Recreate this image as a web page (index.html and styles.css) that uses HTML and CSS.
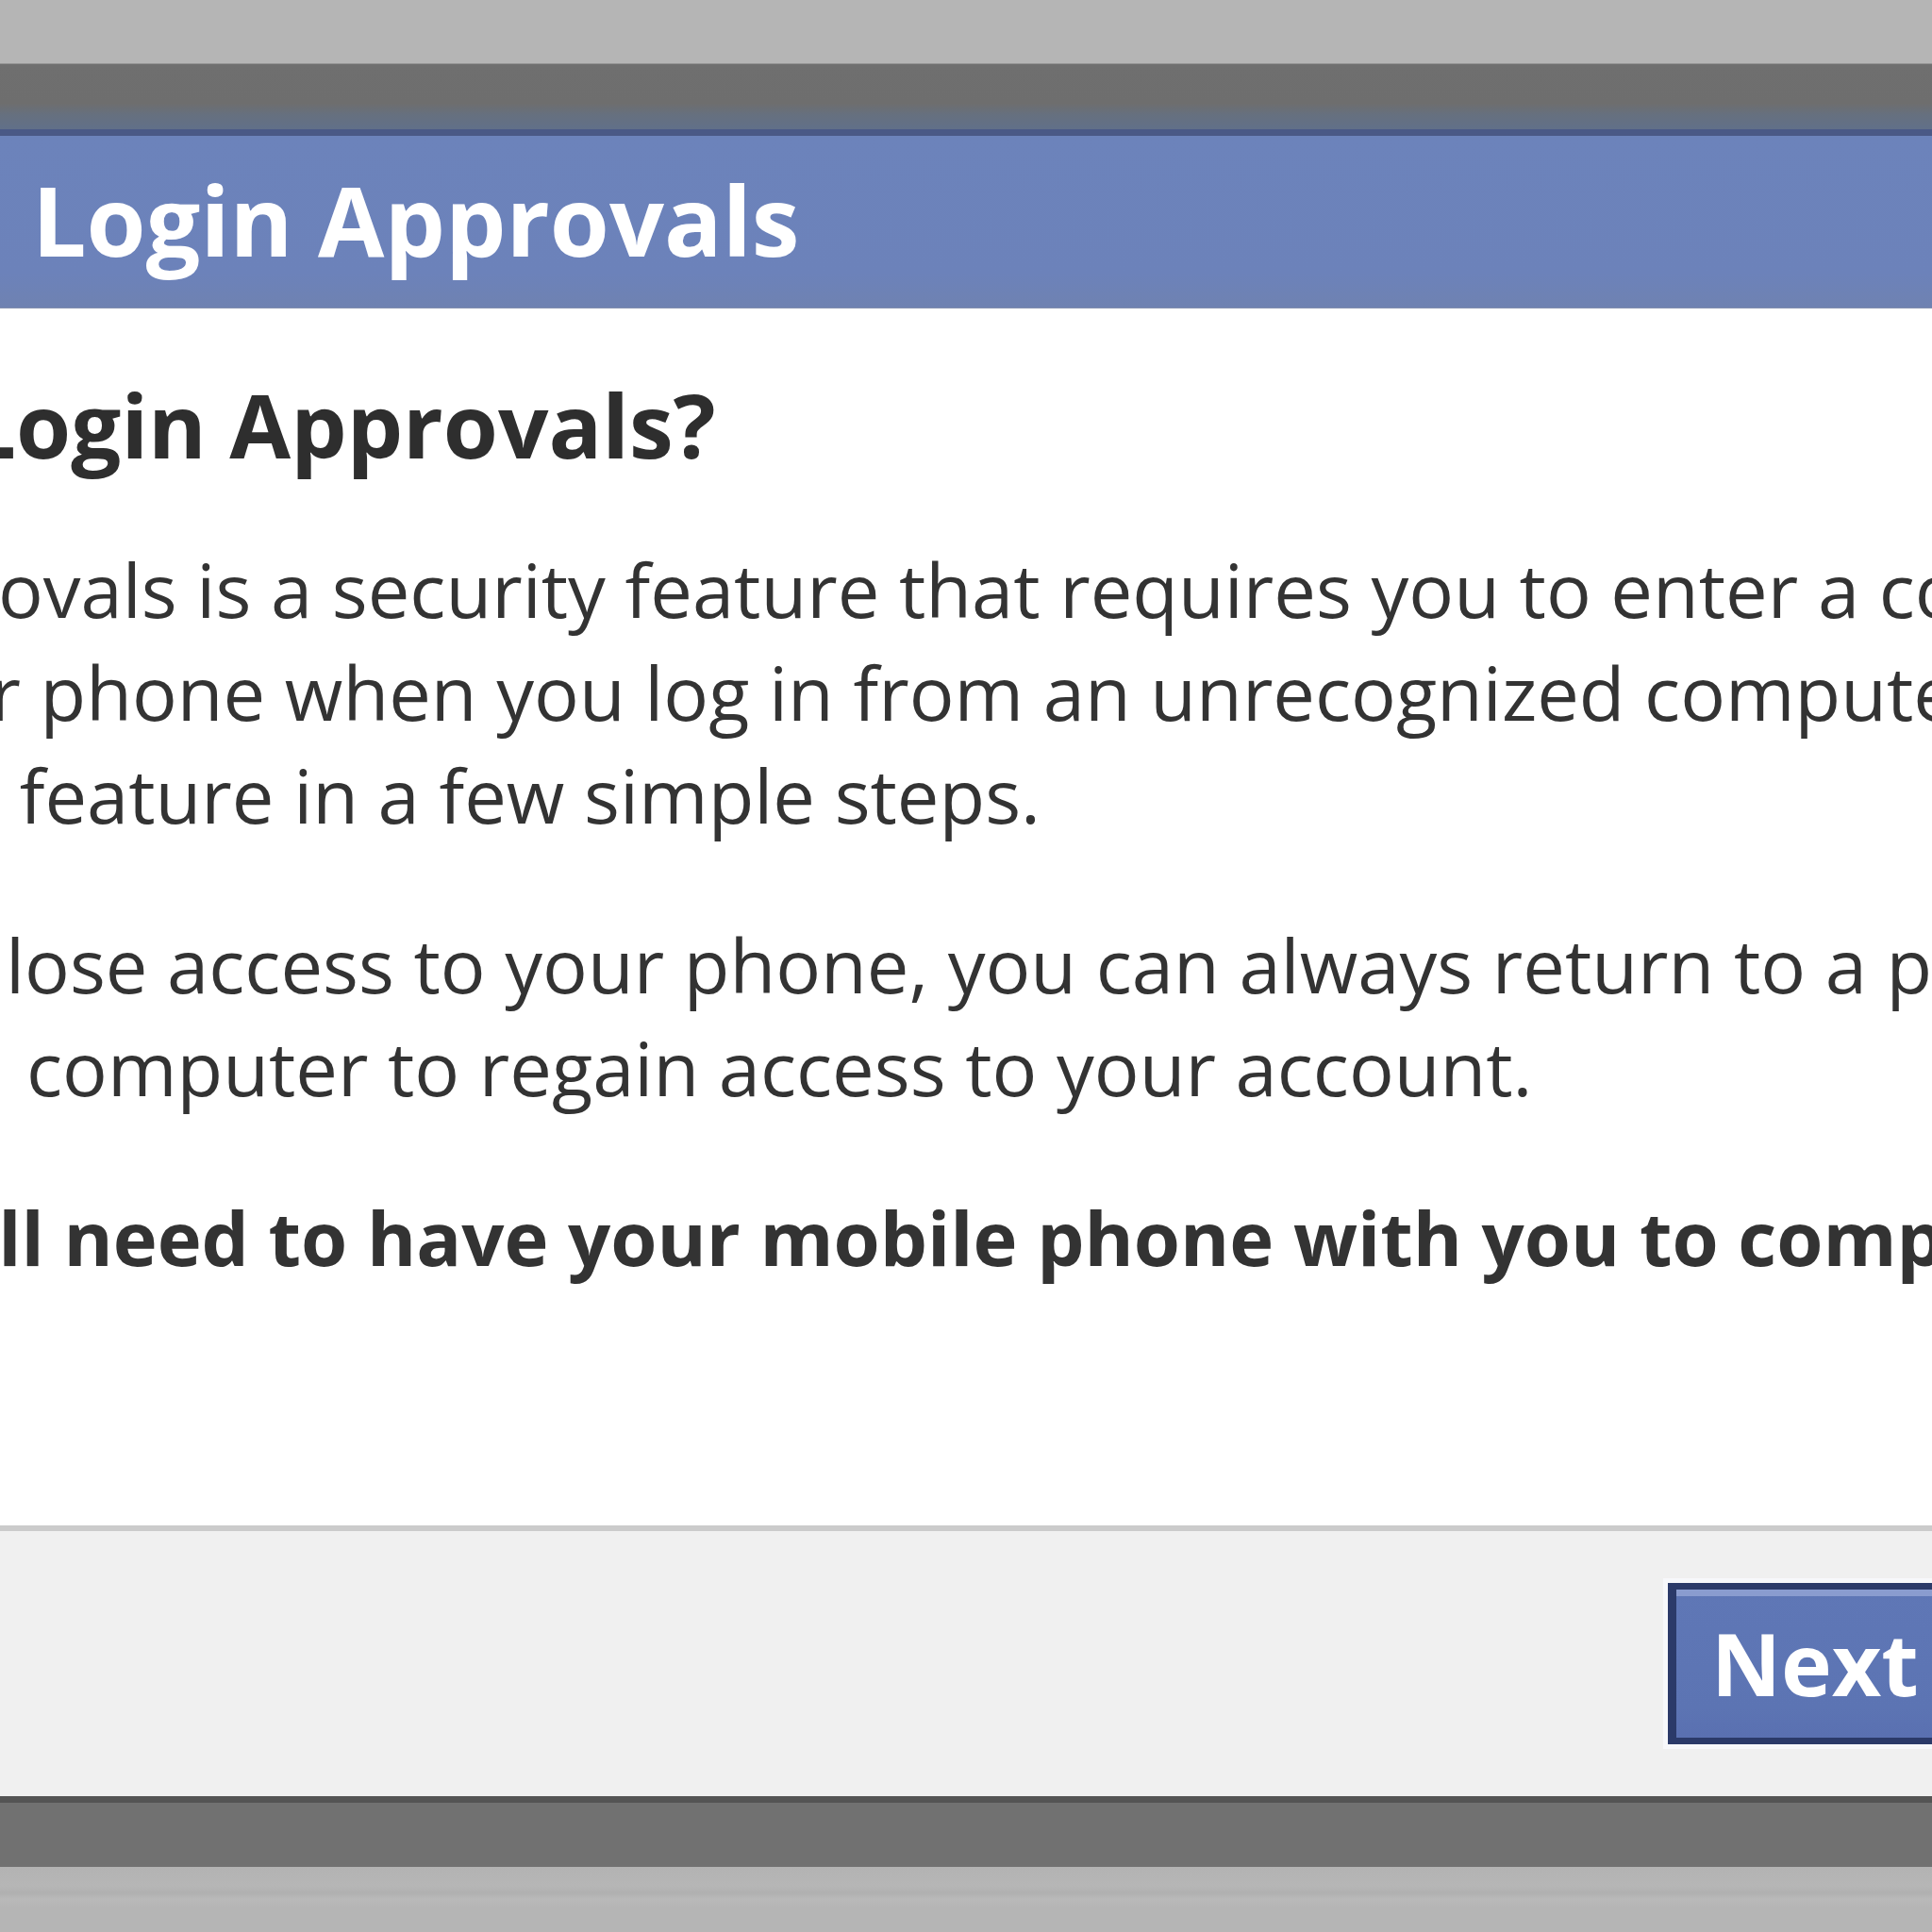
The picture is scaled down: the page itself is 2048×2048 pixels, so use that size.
FILE: index.html
```html
<!DOCTYPE html>
<html lang="en">
<head>
<meta charset="utf-8">
<title>Login Approvals</title>
<link rel="stylesheet" href="styles.css">
</head>
<body>
<div class="screen">
  <div class="shade shade-top"></div>
  <div class="band band-top"></div>
  <section class="dialog">
    <header class="dialog-header">
      <h1 class="dialog-title">Login Approvals</h1>
    </header>
    <div class="dialog-body">
      <h2 class="question">Login Approvals?</h2>
      <p class="para">
        <span class="line p1-l1">Approvals is a security feature that requires you to enter a code</span>
        <span class="line p1-l2">your phone when you log in from an unrecognized computer.</span>
        <span class="line p1-l3">this feature in a few simple steps.</span>
      </p>
      <p class="para">
        <span class="line p2-l1">lose access to your phone, you can always return to a previously</span>
        <span class="line p2-l2">computer to regain access to your account.</span>
      </p>
      <p class="para para-strong">
        <span class="line p3-l1">You'll need to have your mobile phone with you to complete setup.</span>
      </p>
    </div>
    <footer class="dialog-footer">
      <button class="btn-next" type="button">Next</button>
    </footer>
  </section>
  <div class="band band-bottom"></div>
  <div class="shade shade-bottom"></div>
</div>
</body>
</html>
```
FILE: styles.css
```css
html, body {
  margin: 0;
  padding: 0;
  background: #b5b5b5;
}

.screen {
  width: 2048px;
  height: 2048px;
  overflow: hidden;
  display: flex;
  flex-direction: column;
  font-family: "Open Sans", "DejaVu Sans", sans-serif;
}

.shade {
  background: #b5b5b5;
  flex: none;
}

.shade-top {
  height: 67px;
  border-bottom: 1px solid #949494;
}

.shade-bottom {
  height: 69px;
  background: linear-gradient(#b3b3b3 0, #b6b6b6 20px, #b0b0b0 28px, #b9b9b9 34px, #b5b5b5 42px, #b5b5b5 100%);
}

.band {
  flex: none;
}

.band-top {
  height: 69px;
  background: linear-gradient(#6f6f6f 0, #6e6e6e 60%, #66707f 78%, #617089 100%);
}

.band-bottom {
  height: 68px;
  border-top: 7px solid #545454;
  background: #717171;
}

.dialog {
  flex: none;
  display: flex;
  flex-direction: column;
  background: #ffffff;
}

.dialog-header {
  border-top: 7px solid #4a5986;
  border-bottom: 1px solid #8390b0;
  padding: 0 0 5px 34px;
  background: linear-gradient(#6c83bb 0, #6c82ba 80%, #6f82b1 100%);
}

.dialog-title {
  margin: 0;
  font-size: 102px;
  line-height: 177px;
  font-weight: 700;
  color: #ffffff;
  white-space: nowrap;
}

.dialog-body {
  box-sizing: border-box;
  height: 1290px;
  padding-top: 68px;
  background: #ffffff;
  color: #333333;
}

.question {
  margin: 0;
  font-size: 94px;
  line-height: 110px;
  font-weight: 700;
  white-space: nowrap;
  text-indent: -36px;
  color: #2e2e2e;
}

.para {
  margin: 71px 0 0 0;
  font-size: 79.5px;
  line-height: 109px;
  font-weight: 400;
}

.question + .para {
  margin-top: 65px;
}

.para-strong {
  font-weight: 700;
}

.line {
  display: block;
  white-space: nowrap;
}

.p1-l1 { text-indent: -182px; }
.p1-l2 { text-indent: -147px; }
.p1-l3 { text-indent: -135px; }
.p2-l1 { text-indent: 6px; }
.p2-l2 { text-indent: 28px; }
.p3-l1 { text-indent: -174px; }

.dialog-footer {
  box-sizing: border-box;
  height: 287px;
  border-top: 6px solid #cbcbcb;
  background: #f0f0f0;
  display: flex;
  align-items: flex-start;
  padding: 55px 0 0 1768px;
}

.btn-next {
  flex: none;
  margin: 0;
  height: 171px;
  box-sizing: border-box;
  border-style: solid;
  border-color: #2b3a69;
  border-width: 7px 0 7px 9px;
  padding: 0 40px 0 37px;
  background: linear-gradient(#5f77b6 0, #5c74b3 80%, #5a70b1 100%);
  box-shadow: inset 0 7px 0 #8a9ccf, 0 0 0 5px #f7f8fb;
  font-family: "Open Sans", "DejaVu Sans", sans-serif;
  font-size: 91px;
  line-height: 157px;
  font-weight: 700;
  color: #ffffff;
  white-space: nowrap;
  text-align: left;
}
```
